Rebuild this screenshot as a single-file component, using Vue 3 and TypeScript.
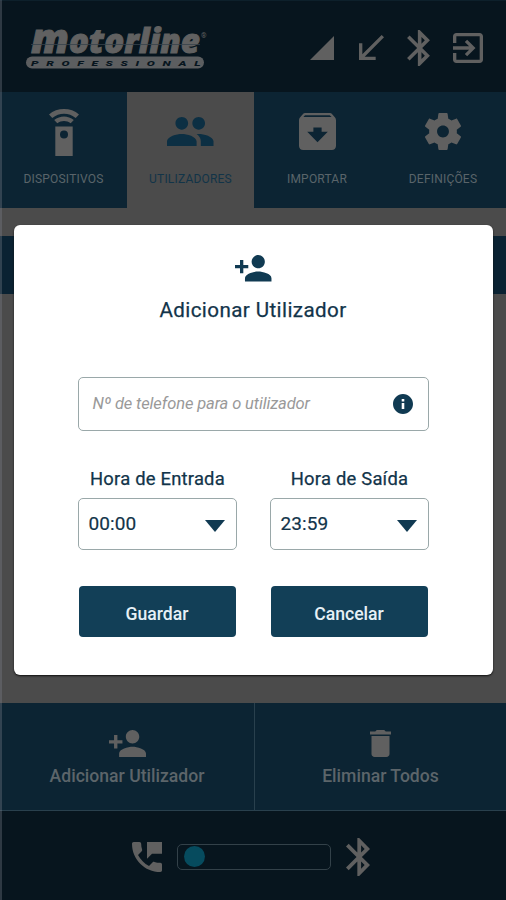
<script setup lang="ts">
interface Glyph {
  box: string
  w: number
  h: number
  d: string
}

const BLUETOOTH =
  'M17.71 7.71L12 2h-1v7.59L6.41 5 5 6.41 10.59 12 5 17.59 6.41 19 11 14.41V22h1l5.71-5.71-4.3-4.29 4.3-4.29zM13 5.83l1.88 1.88L13 9.59V5.83zm1.88 10.46L13 18.17v-3.76l1.88 1.88z'
const PERSON_ADD =
  'M15 12c2.21 0 4-1.79 4-4s-1.79-4-4-4-4 1.79-4 4 1.79 4 4 4zm-9-2V7H4v3H1v2h3v3h2v-3h3v-2H6zm9 4c-2.67 0-8 1.34-8 4v2h16v-2c0-2.66-5.33-4-8-4z'

const statusIcons: Glyph[] = [
  { box: '2 2 20 20', w: 24, h: 24, d: 'M2 22h20V2z' },
  { box: '5 4 15 15', w: 25, h: 25, d: 'M20 5.41L18.59 4 7 15.59V9H5v10h10v-2H8.41z' },
  { box: '5 2 12.71 20', w: 23, h: 36, d: BLUETOOTH },
  {
    box: '3 3 18 18',
    w: 30,
    h: 30,
    d: 'M10.09 15.59L11.5 17l5-5-5-5-1.41 1.41L12.67 11H3v2h9.67l-2.58 2.59zM19 3H5c-1.11 0-2 .9-2 2v4h2V5h14v14H5v-4H3v4c0 1.1.89 2 2 2h14c1.1 0 2-.9 2-2V5c0-1.1-.9-2-2-2z',
  },
]

const tabs: { label: string; active: boolean; icon: Glyph }[] = [
  {
    label: 'DISPOSITIVOS',
    active: false,
    icon: {
      box: '0 0 32 48',
      w: 32,
      h: 48,
      d: 'M1 6.5C9 -.8 23 -.8 31 6.5L27.7 10C21 4.2 11 4.2 4.3 10zM6.2 12C12 7.3 20 7.3 25.8 12L22.7 15.3C18.5 12.2 13.5 12.2 9.3 15.3zM7.3 18.5h17.4V48H7.3zM16 22.5a4 4 0 1 0 0 8 4 4 0 0 0 0-8z',
    },
  },
  {
    label: 'UTILIZADORES',
    active: true,
    icon: {
      box: '1 5 22 14',
      w: 46.5,
      h: 29.6,
      d: 'M16 11c1.66 0 2.99-1.34 2.99-3S17.66 5 16 5c-1.66 0-3 1.34-3 3s1.34 3 3 3zm-8 0c1.66 0 2.99-1.34 2.99-3S9.66 5 8 5C6.34 5 5 6.34 5 8s1.34 3 3 3zm0 2c-2.33 0-7 1.17-7 3.5V19h14v-2.5c0-2.33-4.67-3.5-7-3.5zm8 0c-.29 0-.62.02-.97.05 1.16.84 1.97 1.97 1.97 3.45V19h6v-2.5c0-2.33-4.67-3.5-7-3.5z',
    },
  },
  {
    label: 'IMPORTAR',
    active: false,
    icon: {
      box: '3 3 18 18',
      w: 37,
      h: 37,
      d: 'M20.54 5.23l-1.39-1.68C18.88 3.21 18.47 3 18 3H6c-.47 0-.88.21-1.16.55L3.46 5.23C3.17 5.57 3 6.02 3 6.5V19c0 1.1.9 2 2 2h14c1.1 0 2-.9 2-2V6.5c0-.48-.17-.93-.46-1.27zM12 17.2L7 12.1H10v-2h4v2h3zM5.12 4.9l.81-.8h12l.94 .8H5.12z',
    },
  },
  {
    label: 'DEFINIÇÕES',
    active: false,
    icon: {
      box: '2.3 2 19.4 20',
      w: 36,
      h: 37,
      d: 'M19.43 12.98c.04-.32.07-.64.07-.98s-.03-.66-.07-.98l2.11-1.65c.19-.15.24-.42.12-.64l-2-3.46c-.12-.22-.39-.3-.61-.22l-2.49 1c-.52-.4-1.08-.73-1.69-.98l-.38-2.65C14.46 2.18 14.25 2 14 2h-4c-.25 0-.46.18-.49.42l-.38 2.65c-.61.25-1.17.59-1.69.98l-2.49-1c-.23-.09-.49 0-.61.22l-2 3.46c-.13.22-.07.49.12.64l2.11 1.65c-.04.32-.07.65-.07.98s.03.66.07.98l-2.11 1.65c-.19.15-.24.42-.12.64l2 3.46c.12.22.39.3.61.22l2.49-1c.52.4 1.08.73 1.69.98l.38 2.65c.03.24.24.42.49.42h4c.25 0 .46-.18.49-.42l.38-2.65c.61-.25 1.17-.59 1.69-.98l2.49 1c.23.09.49 0 .61-.22l2-3.46c.12-.22.07-.49-.12-.64l-2.11-1.65zM12 15.2c-1.77 0-3.2-1.43-3.2-3.2s1.43-3.2 3.2-3.2 3.2 1.43 3.2 3.2-1.43 3.2-3.2 3.2z',
    },
  },
]

const actions: { label: string; icon: Glyph }[] = [
  { label: 'Adicionar Utilizador', icon: { box: '1 4 22 16', w: 37, h: 27, d: PERSON_ADD } },
  {
    label: 'Eliminar Todos',
    icon: {
      box: '5 3 14 18',
      w: 21,
      h: 27,
      d: 'M6 19c0 1.1.9 2 2 2h8c1.1 0 2-.9 2-2V7H6v12zM19 4h-3.5l-1-1h-5l-1 1H5v2h14V4z',
    },
  },
]

const times = [
  { label: 'Hora de Entrada', value: '00:00' },
  { label: 'Hora de Saída', value: '23:59' },
]
</script>

<template>
  <div class="screen">
    <header class="top">
      <svg class="logo" width="184" height="46" viewBox="0 0 184 46">
        <text class="brand" x="5" y="29" textLength="169" lengthAdjust="spacingAndGlyphs"><tspan class="brand-m">m</tspan>otorline</text>
        <path class="cut" d="M5 20.500H174" />
        <text class="reg" x="175" y="14">®</text>
        <rect class="pill" x="0" y="32.500" width="178" height="12" rx="6" />
        <text class="pro" transform="translate(5 41.500) scale(1.5 1)" textLength="113">PROFESSIONAL</text>
      </svg>
      <div class="status">
        <svg v-for="(g, i) in statusIcons" :key="i" :viewBox="g.box" :width="g.w" :height="g.h">
          <path :d="g.d" />
        </svg>
      </div>
    </header>

    <nav class="tabs">
      <div v-for="t in tabs" :key="t.label" class="tab" :class="{ active: t.active }">
        <div class="tab-icon">
          <svg :viewBox="t.icon.box" :width="t.icon.w" :height="t.icon.h">
            <path fill-rule="evenodd" :d="t.icon.d" />
          </svg>
        </div>
        <span>{{ t.label }}</span>
      </div>
    </nav>

    <main class="content"><div class="list-head"></div></main>

    <div class="actions">
      <div v-for="a in actions" :key="a.label" class="action">
        <svg :viewBox="a.icon.box" :width="a.icon.w" :height="a.icon.h"><path :d="a.icon.d" /></svg>
        <span>{{ a.label }}</span>
      </div>
    </div>

    <footer class="foot">
      <svg viewBox="3 3 18 18" width="30" height="30">
        <path
          d="M20 15.5c-1.25 0-2.45-.2-3.57-.57-.35-.11-.74-.03-1.02.24l-2.2 2.2c-2.83-1.44-5.15-3.75-6.59-6.58l2.2-2.21c.28-.27.36-.66.25-1.01C8.7 6.45 8.5 5.25 8.5 4c0-.55-.45-1-1-1H4c-.55 0-1 .45-1 1 0 9.39 7.61 17 17 17 .55 0 1-.45 1-1v-3.5c0-.55-.45-1-1-1zM12 3v10l3-3h6V3h-9z"
        />
      </svg>
      <div class="track"><i class="dot"></i></div>
      <svg viewBox="5 2 12.71 20" width="24" height="38"><path :d="BLUETOOTH" /></svg>
    </footer>

    <div class="overlay">
      <section class="modal">
        <svg class="modal-icon" viewBox="1 4 22 16" width="36.5" height="26.5"><path :d="PERSON_ADD" /></svg>
        <h1>Adicionar Utilizador</h1>
        <div class="field phone">
          <span>Nº de telefone para o utilizador</span>
          <svg viewBox="2 2 20 20" width="20" height="20">
            <path
              d="M12 2C6.48 2 2 6.48 2 12s4.48 10 10 10 10-4.48 10-10S17.52 2 12 2zm1.3 15h-2.6v-6h2.6v6zm0-7.5h-2.6V7h2.6v2.5z"
            />
          </svg>
        </div>
        <div class="pair">
          <div v-for="t in times" :key="t.label" class="time">
            <label>{{ t.label }}</label>
            <div class="field select">
              <span>{{ t.value }}</span>
              <svg viewBox="0 0 20 12" width="20" height="12"><path d="M0 0H20L10 12z" /></svg>
            </div>
          </div>
        </div>
        <div class="pair buttons">
          <button type="button">Guardar</button>
          <button type="button">Cancelar</button>
        </div>
      </section>
    </div>
  </div>
</template>

<style>
body {
  margin: 0;
}
</style>

<style scoped>
.screen {
  position: relative;
  width: 506px;
  height: 900px;
  overflow: hidden;
  display: flex;
  flex-direction: column;
  box-sizing: border-box;
  background: #4b4b4b;
  font-family: Roboto, "Liberation Sans", sans-serif;
}
.screen::after {
  content: "";
  position: absolute;
  top: 0;
  bottom: 0;
  left: 0;
  width: 2px;
  background: rgba(130, 135, 145, 0.32);
}
svg {
  display: block;
  flex: none;
  fill: #606060;
}
.top {
  height: 92px;
  box-sizing: border-box;
  flex: none;
  display: flex;
  justify-content: space-between;
  padding: 0 23px 0 26px;
  background: #07151e;
  border-top: 1px solid #0d202b;
}
.logo {
  margin-top: 23px;
  overflow: visible;
}
.brand {
  font: italic 800 33px "Open Sans", sans-serif;
  fill: #616161;
  stroke: #616161;
  stroke-width: 0.9px;
}
.brand-m {
  font-size: 41px;
}
.cut {
  stroke: #36414a;
  stroke-width: 0.8px;
}
.reg {
  font: 7px Roboto, sans-serif;
}
.pill {
  fill: #5c5e60;
}
.pro {
  font: italic 900 8px Roboto, sans-serif;
  fill: #07151e;
}
.status {
  display: flex;
  align-items: center;
  gap: 23px;
  padding-top: 2px;
}
.status svg:nth-child(2) {
  margin-left: 2px;
}
.tabs {
  flex: none;
  height: 116px;
  display: grid;
  grid-template-columns: 127px 127px 126px 126px;
}
.tab {
  display: flex;
  flex-direction: column;
  align-items: center;
  background: #0c2433;
  color: #5a646a;
  font-size: 12px;
  letter-spacing: 0.2px;
  line-height: 16px;
}
.tab.active {
  background: #4b4b4b;
  color: #123448;
}
.tab.active svg {
  fill: #0c2f43;
}
.tab-icon {
  height: 79px;
  display: flex;
  align-items: center;
}
.content {
  flex: 1;
  padding-top: 28px;
}
.list-head {
  height: 58px;
  background: #0a2232;
}
.actions {
  flex: none;
  height: 107px;
  display: grid;
  grid-template-columns: 255px 251px;
  background: #0c2433;
}
.action {
  display: flex;
  flex-direction: column;
  align-items: center;
  gap: 8px;
  padding-top: 27px;
  color: #5c656a;
  font-size: 17.6px;
  font-weight: 500;
  line-height: 22px;
}
.action:first-child {
  border-right: 1px solid #29404d;
}
.foot {
  flex: none;
  height: 90px;
  box-sizing: border-box;
  display: flex;
  align-items: center;
  padding: 2px 0 0 132px;
  gap: 15px;
  background: #07151e;
  border-top: 1px solid #29404d;
}
.track {
  width: 154px;
  height: 26px;
  box-sizing: border-box;
  border: 1.5px solid #334149;
  border-radius: 5px;
  display: flex;
  align-items: center;
  padding-left: 6px;
}
.dot {
  width: 21px;
  height: 21px;
  border-radius: 50%;
  background: #064b5e;
}
.overlay {
  position: absolute;
  inset: 0;
  display: flex;
  justify-content: center;
  align-items: center;
}
.modal {
  width: 479px;
  height: 450px;
  box-sizing: border-box;
  padding: 30px 64px 0;
  border-radius: 6px;
  background: #fff;
  box-shadow: 0 1px 2px #111;
  color: #12344a;
}
.modal svg {
  fill: #103a52;
}
.modal-icon {
  margin: 0 auto;
  padding-left: 1px;
}
h1 {
  margin: 15px 0 0;
  font-size: 20.6px;
  font-weight: 400;
  line-height: 26px;
  text-align: center;
  letter-spacing: 0.4px;
  -webkit-text-stroke: 0.25px #12344a;
}
.field {
  display: flex;
  align-items: center;
  justify-content: space-between;
  box-sizing: border-box;
  border: 1px solid #9aa8a9;
  border-radius: 5px;
}
.phone {
  height: 54px;
  margin-top: 54px;
  padding: 0 15px 0 14px;
  color: #999;
  font-size: 16.5px;
  letter-spacing: -0.12px;
  font-style: italic;
}
.pair {
  display: grid;
  grid-template-columns: 159px 159px;
  justify-content: space-between;
}
.time {
  padding-top: 36px;
}
label {
  display: block;
  height: 31px;
  line-height: 23px;
  text-align: center;
  font-size: 18.4px;
  letter-spacing: 0.22px;
  padding-left: 1px;
  -webkit-text-stroke: 0.25px #12344a;
}
.select {
  height: 52px;
  padding: 0 11px 0 10px;
  font-size: 19px;
  letter-spacing: 0.1px;
  -webkit-text-stroke: 0.2px #12344a;
}
.select svg {
  margin-top: 5px;
}
.buttons {
  margin-top: 36px;
  padding: 0 1px;
  grid-template-columns: 157px 157px;
}
button {
  height: 51px;
  padding: 5px 0 0;
  border: 0;
  border-radius: 4px;
  background: #123f57;
  color: #e6f0f6;
  font: 500 17.6px Roboto, sans-serif;
}
</style>
